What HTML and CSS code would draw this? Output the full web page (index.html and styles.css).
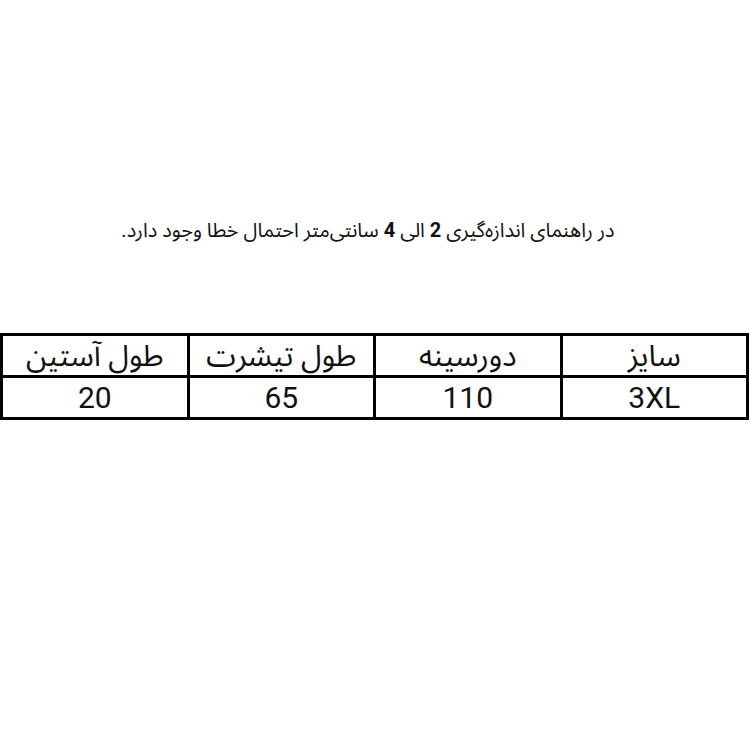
FILE: index.html
```html
<!DOCTYPE html>
<html lang="fa" dir="rtl">
<head>
<meta charset="utf-8">
<title>راهنمای سایز</title>
<link rel="stylesheet" href="styles.css">
</head>
<body>
<main class="page">
  <p class="note">در راهنمای اندازه‌گیری <b>2</b> الی <b>4</b> سانتی‌متر احتمال خطا وجود دارد.</p>
  <table class="sizes">
    <tr>
      <td>سایز</td>
      <td>دورسینه</td>
      <td>طول تیشرت</td>
      <td>طول آستین</td>
    </tr>
    <tr>
      <td>3XL</td>
      <td>110</td>
      <td>65</td>
      <td>20</td>
    </tr>
  </table>
</main>
</body>
</html>
```

FILE: styles.css
```css
html, body {
  margin: 0;
  padding: 0;
  background: #fff;
}
body {
  width: 750px;
  height: 750px;
  font-family: Roboto, "Noto Sans Arabic", "DejaVu Sans", sans-serif;
  color: #111;
}
.page {
  padding-top: 214px;
}
.note {
  margin: 0;
  text-align: center;
  font-size: 20px;
  line-height: 32px;
  padding-right: 14px;
}
.note b {
  font-weight: 700;
}
.sizes {
  margin-top: 87px;
  margin-right: 1px;
  width: 749px;
  border-collapse: collapse;
  table-layout: fixed;
}
.sizes td {
  border: 3px solid #000;
  height: 39px;
  padding: 0;
  text-align: center;
  font-size: 30px;
  line-height: 39px;
}
```
